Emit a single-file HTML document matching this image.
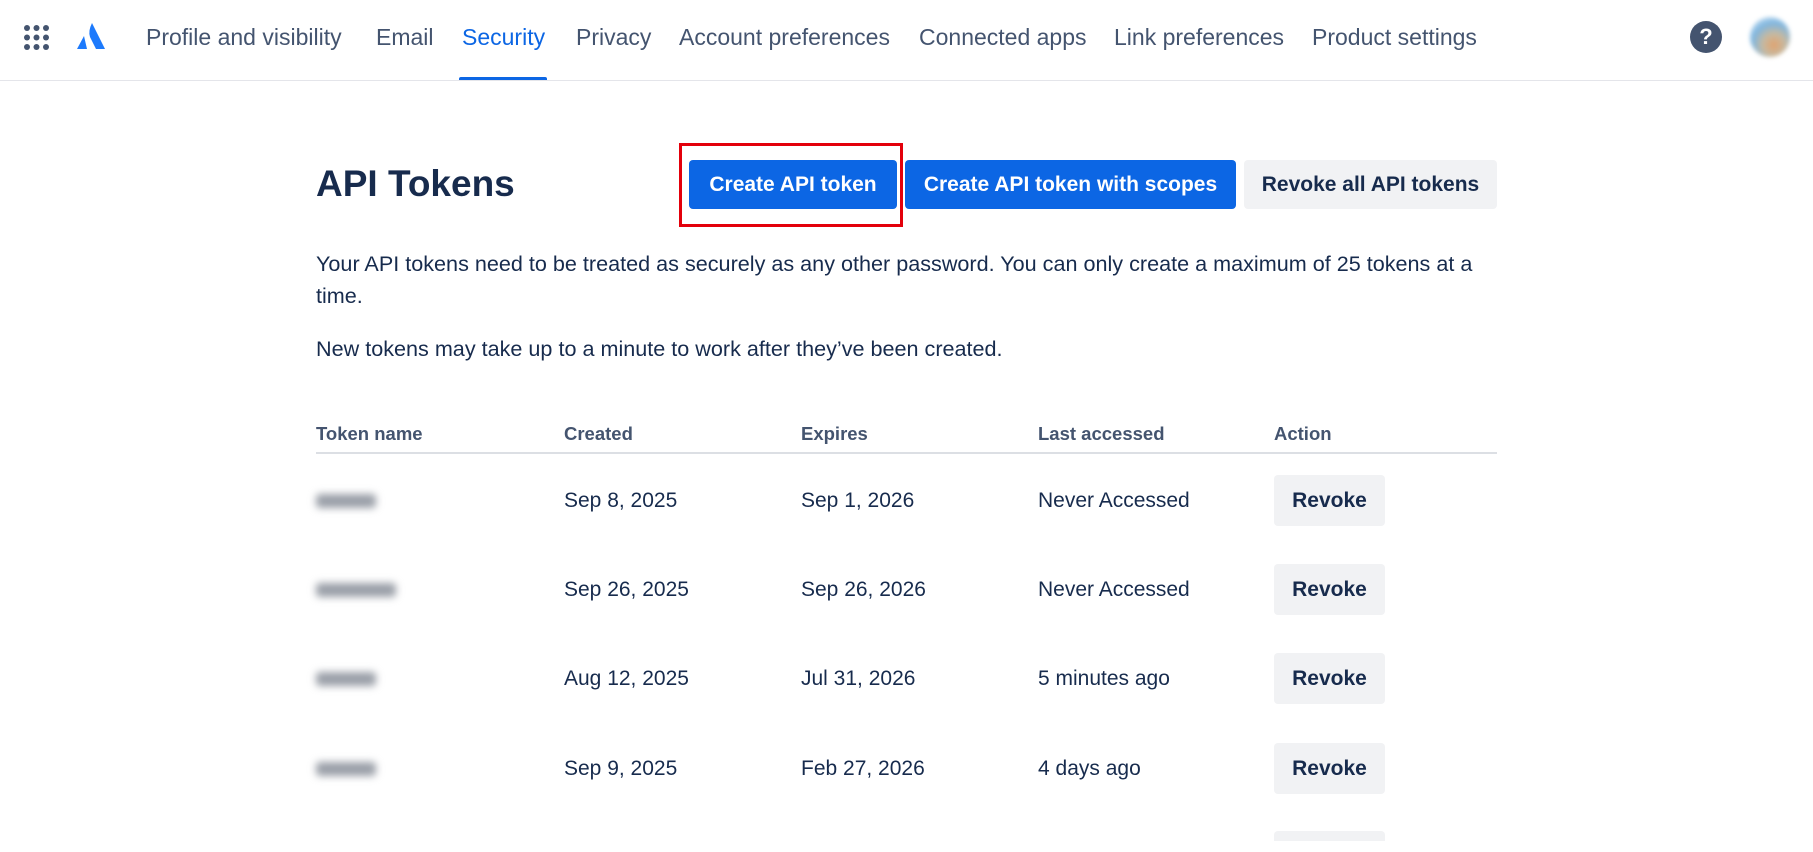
<!DOCTYPE html>
<html><head><meta charset="utf-8"><style>
*{margin:0;padding:0;box-sizing:border-box}
body{width:1813px;height:852px;overflow:hidden;background:#fff;font-family:"Liberation Sans",sans-serif;color:#172b4d;position:relative}
.a{position:absolute;white-space:nowrap}
.nav{top:24px;font-size:23px;color:#44546f}
.btn{position:absolute;top:160px;height:49px;border-radius:4px;font-size:21px;font-weight:bold;display:flex;align-items:center;justify-content:center}
.th{top:423px;font-size:18.5px;font-weight:bold;color:#44546f}
.td{font-size:21px;color:#172b4d}
.rv{position:absolute;left:1274px;width:111px;height:51px;background:#f1f2f4;border-radius:4px;font-size:21px;font-weight:bold;display:flex;align-items:center;justify-content:center}
.bl{position:absolute;left:316px;height:14px;background:#9a9fa8;filter:blur(4px);border-radius:4px}
</style></head><body>
<svg class="a" style="left:23px;top:24px" width="27" height="27" viewBox="0 0 27 27" fill="#44546f">
<circle cx="4" cy="4" r="3"/><circle cx="13.5" cy="4" r="3"/><circle cx="23" cy="4" r="3"/>
<circle cx="4" cy="13.5" r="3"/><circle cx="13.5" cy="13.5" r="3"/><circle cx="23" cy="13.5" r="3"/>
<circle cx="4" cy="23" r="3"/><circle cx="13.5" cy="23" r="3"/><circle cx="23" cy="23" r="3"/></svg>
<svg class="a" style="left:76px;top:22px" width="30" height="28" viewBox="0 0 30 28" fill="#1d7afc">
<path d="M8 14 L1 27 H11 Z"/><path d="M16 1 Q12 9 14 15 L20 27 H29 Z"/></svg>
<div class="a nav" style="left:146px">Profile and visibility</div>
<div class="a nav" style="left:376px">Email</div>
<div class="a nav" style="left:462px;color:#0c66e4">Security</div>
<div class="a" style="left:459px;top:77px;width:88px;height:4px;background:#0c66e4;border-radius:2px 2px 0 0"></div>
<div class="a nav" style="left:576px">Privacy</div>
<div class="a nav" style="left:679px">Account preferences</div>
<div class="a nav" style="left:919px">Connected apps</div>
<div class="a nav" style="left:1114px">Link preferences</div>
<div class="a nav" style="left:1312px">Product settings</div>
<div class="a" style="left:1690px;top:21px;width:32px;height:32px;border-radius:50%;background:#44546f;color:#fff;font-weight:bold;font-size:22px;text-align:center;line-height:32px">?</div>
<div class="a" style="left:1750px;top:17px;width:40px;height:40px;border-radius:50%;background:radial-gradient(circle at 60% 70%,#e0a370 0,#c7b9a0 30%,#7fb6e0 60%,#fff 100%);filter:blur(2px)"></div>
<div class="a" style="left:0;top:80px;width:1813px;height:1px;background:#e4e5ea"></div>

<div class="a" style="left:316px;top:163px;font-size:37px;font-weight:bold">API Tokens</div>
<div class="a" style="left:679px;top:143px;width:224px;height:84px;border:3px solid #e3000b"></div>
<div class="btn" style="left:689px;width:208px;background:#0c66e4;color:#fff">Create API token</div>
<div class="btn" style="left:905px;width:331px;background:#0c66e4;color:#fff">Create API token with scopes</div>
<div class="btn" style="left:1244px;width:253px;background:#f1f2f4;color:#172b4d">Revoke all API tokens</div>

<div class="a" style="left:316px;top:248px;font-size:21.6px;line-height:32px;white-space:normal;width:1190px">Your API tokens need to be treated as securely as any other password. You can only create a maximum of 25 tokens at a time.</div>
<div class="a" style="left:316px;top:336px;font-size:21.6px">New tokens may take up to a minute to work after they’ve been created.</div>

<div class="a th" style="left:316px">Token name</div>
<div class="a th" style="left:564px">Created</div>
<div class="a th" style="left:801px">Expires</div>
<div class="a th" style="left:1038px">Last accessed</div>
<div class="a th" style="left:1274px">Action</div>
<div class="a" style="left:316px;top:452px;width:1181px;height:2px;background:#dcdfe4"></div>

<div class="bl" style="top:494px;width:60px"></div>
<div class="a td" style="left:564px;top:489px">Sep 8, 2025</div>
<div class="a td" style="left:801px;top:489px">Sep 1, 2026</div>
<div class="a td" style="left:1038px;top:489px">Never Accessed</div>
<div class="rv" style="top:475px">Revoke</div>

<div class="bl" style="top:583px;width:80px"></div>
<div class="a td" style="left:564px;top:578px">Sep 26, 2025</div>
<div class="a td" style="left:801px;top:578px">Sep 26, 2026</div>
<div class="a td" style="left:1038px;top:578px">Never Accessed</div>
<div class="rv" style="top:564px">Revoke</div>

<div class="bl" style="top:672px;width:60px"></div>
<div class="a td" style="left:564px;top:667px">Aug 12, 2025</div>
<div class="a td" style="left:801px;top:667px">Jul 31, 2026</div>
<div class="a td" style="left:1038px;top:667px">5 minutes ago</div>
<div class="rv" style="top:653px">Revoke</div>

<div class="bl" style="top:762px;width:60px"></div>
<div class="a td" style="left:564px;top:757px">Sep 9, 2025</div>
<div class="a td" style="left:801px;top:757px">Feb 27, 2026</div>
<div class="a td" style="left:1038px;top:757px">4 days ago</div>
<div class="rv" style="top:743px">Revoke</div>

<div class="a" style="left:1274px;top:831px;width:111px;height:10px;background:#f1f2f4;border-radius:4px 4px 0 0"></div>
</body></html>
